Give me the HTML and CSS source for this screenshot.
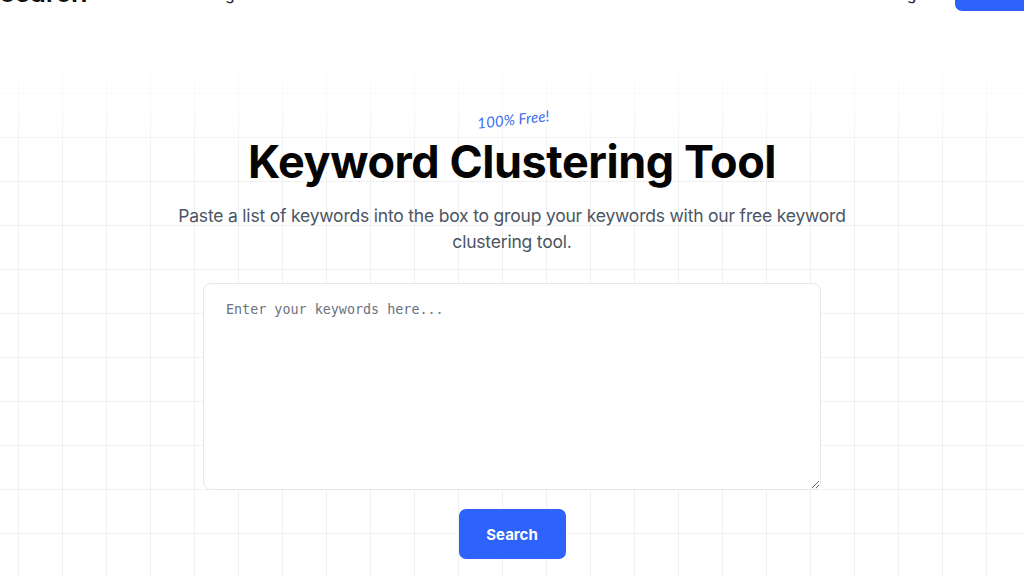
FILE: index.html
```html
<!DOCTYPE html>
<html lang="en">
<head>
<meta charset="utf-8">
<title>Keyword Clustering Tool</title>
<link rel="stylesheet" href="styles.css">
</head>
<body>
<div class="page">
  <header class="topbar">
    <span class="logo">search</span>
    <nav class="nav-left"><a class="nav-link" href="#">Pricing</a></nav>
    <div class="nav-right">
      <a class="nav-link" href="#">Login</a>
      <a class="signup" href="#">Sign up</a>
    </div>
  </header>

  <main class="hero">
    <div class="hero-inner">
      <span class="free-tag">100% Free!</span>
      <h1 class="title">Keyword Clustering Tool</h1>
      <p class="subtitle">Paste a list of keywords into the box to group your keywords with our free keyword clustering tool.</p>
      <textarea class="keywords" placeholder="Enter your keywords here..."></textarea>
      <button class="search-btn" type="button">Search</button>
    </div>
  </main>
</div>
</body>
</html>
```

FILE: styles.css
```css
* { box-sizing: border-box; }

html, body {
  margin: 0;
  padding: 0;
  background: #ffffff;
  overflow: hidden;
}

body {
  font-family: Inter, "Noto Sans", Arial, sans-serif;
  color: #0a0a0a;
}

.page {
  width: 1024px;
  height: 576px;
  overflow: hidden;
}

.topbar {
  display: flex;
  align-items: flex-end;
  height: 51px;
  margin-top: -40px;
  width: 1060px;
}

.logo {
  font-size: 27px;
  font-weight: 600;
  line-height: 1;
  letter-spacing: -0.01em;
  margin-bottom: 5px;
  color: #111111;
}

.nav-left {
  margin-left: 97px;
  display: flex;
}

.nav-link {
  font-size: 15px;
  line-height: 1;
  color: #1f2937;
  text-decoration: none;
  margin-bottom: 9px;
  font-weight: 500;
}

.nav-right {
  margin-left: auto;
  display: flex;
  align-items: flex-end;
  gap: 26px;
}

.signup {
  display: flex;
  align-items: center;
  justify-content: center;
  height: 44px;
  width: 105px;
  background: #2d62fb;
  border-radius: 7px;
  color: #fff;
  font-size: 15px;
  font-weight: 600;
  text-decoration: none;
}

.hero {
  position: relative;
  margin-top: 59px;
  height: 506px;
}

.hero::before {
  content: "";
  position: absolute;
  inset: 0;
  background-image:
    linear-gradient(to right, #f0f0f0 1px, transparent 1px),
    linear-gradient(to bottom, #f0f0f0 1px, transparent 1px);
  background-size: 44px 44px;
  background-position: 18px 23px;
  -webkit-mask-image: linear-gradient(to bottom, rgba(0,0,0,0.25) 0, rgba(0,0,0,0.5) 40px, #000 90px);
  mask-image: linear-gradient(to bottom, rgba(0,0,0,0.25) 0, rgba(0,0,0,0.5) 40px, #000 90px);
  z-index: 0;
}

.hero-inner {
  position: relative;
  z-index: 1;
  display: flex;
  flex-direction: column;
  align-items: center;
  padding-top: 40px;
}

.free-tag {
  font-family: Lato, "DejaVu Sans", sans-serif;
  font-style: italic;
  font-size: 15px;
  line-height: 18px;
  color: #3b6cf2;
  transform: rotate(-6deg);
  letter-spacing: 0.01em;
  margin-left: 2px;
}

.title {
  margin: 6px 0 0;
  font-size: 45px;
  line-height: 56px;
  font-weight: 700;
  letter-spacing: -0.01em;
  color: #050505;
}

.subtitle {
  margin: 13px 0 0;
  max-width: 700px;
  font-size: 17.5px;
  letter-spacing: -0.2px;
  line-height: 26px;
  color: #4b5563;
  text-align: center;
}

.keywords {
  display: block;
  margin-top: 28px;
  width: 618px;
  height: 207px;
  padding: 16px 22px;
  border: 1px solid #e5e7eb;
  border-radius: 8px;
  background: #ffffff;
  font-family: "DejaVu Sans Mono", "Liberation Mono", monospace;
  font-size: 13.4px;
  line-height: 20px;
  color: #111827;
  resize: vertical;
  outline: none;
}

.keywords::placeholder {
  color: #6b7280;
}

.search-btn {
  margin-top: 19px;
  width: 107px;
  height: 50px;
  border: none;
  border-radius: 7px;
  background: #2d62fb;
  color: #ffffff;
  font-family: Inter, "Noto Sans", sans-serif;
  font-size: 15px;
  font-weight: 700;
  cursor: pointer;
}
```
